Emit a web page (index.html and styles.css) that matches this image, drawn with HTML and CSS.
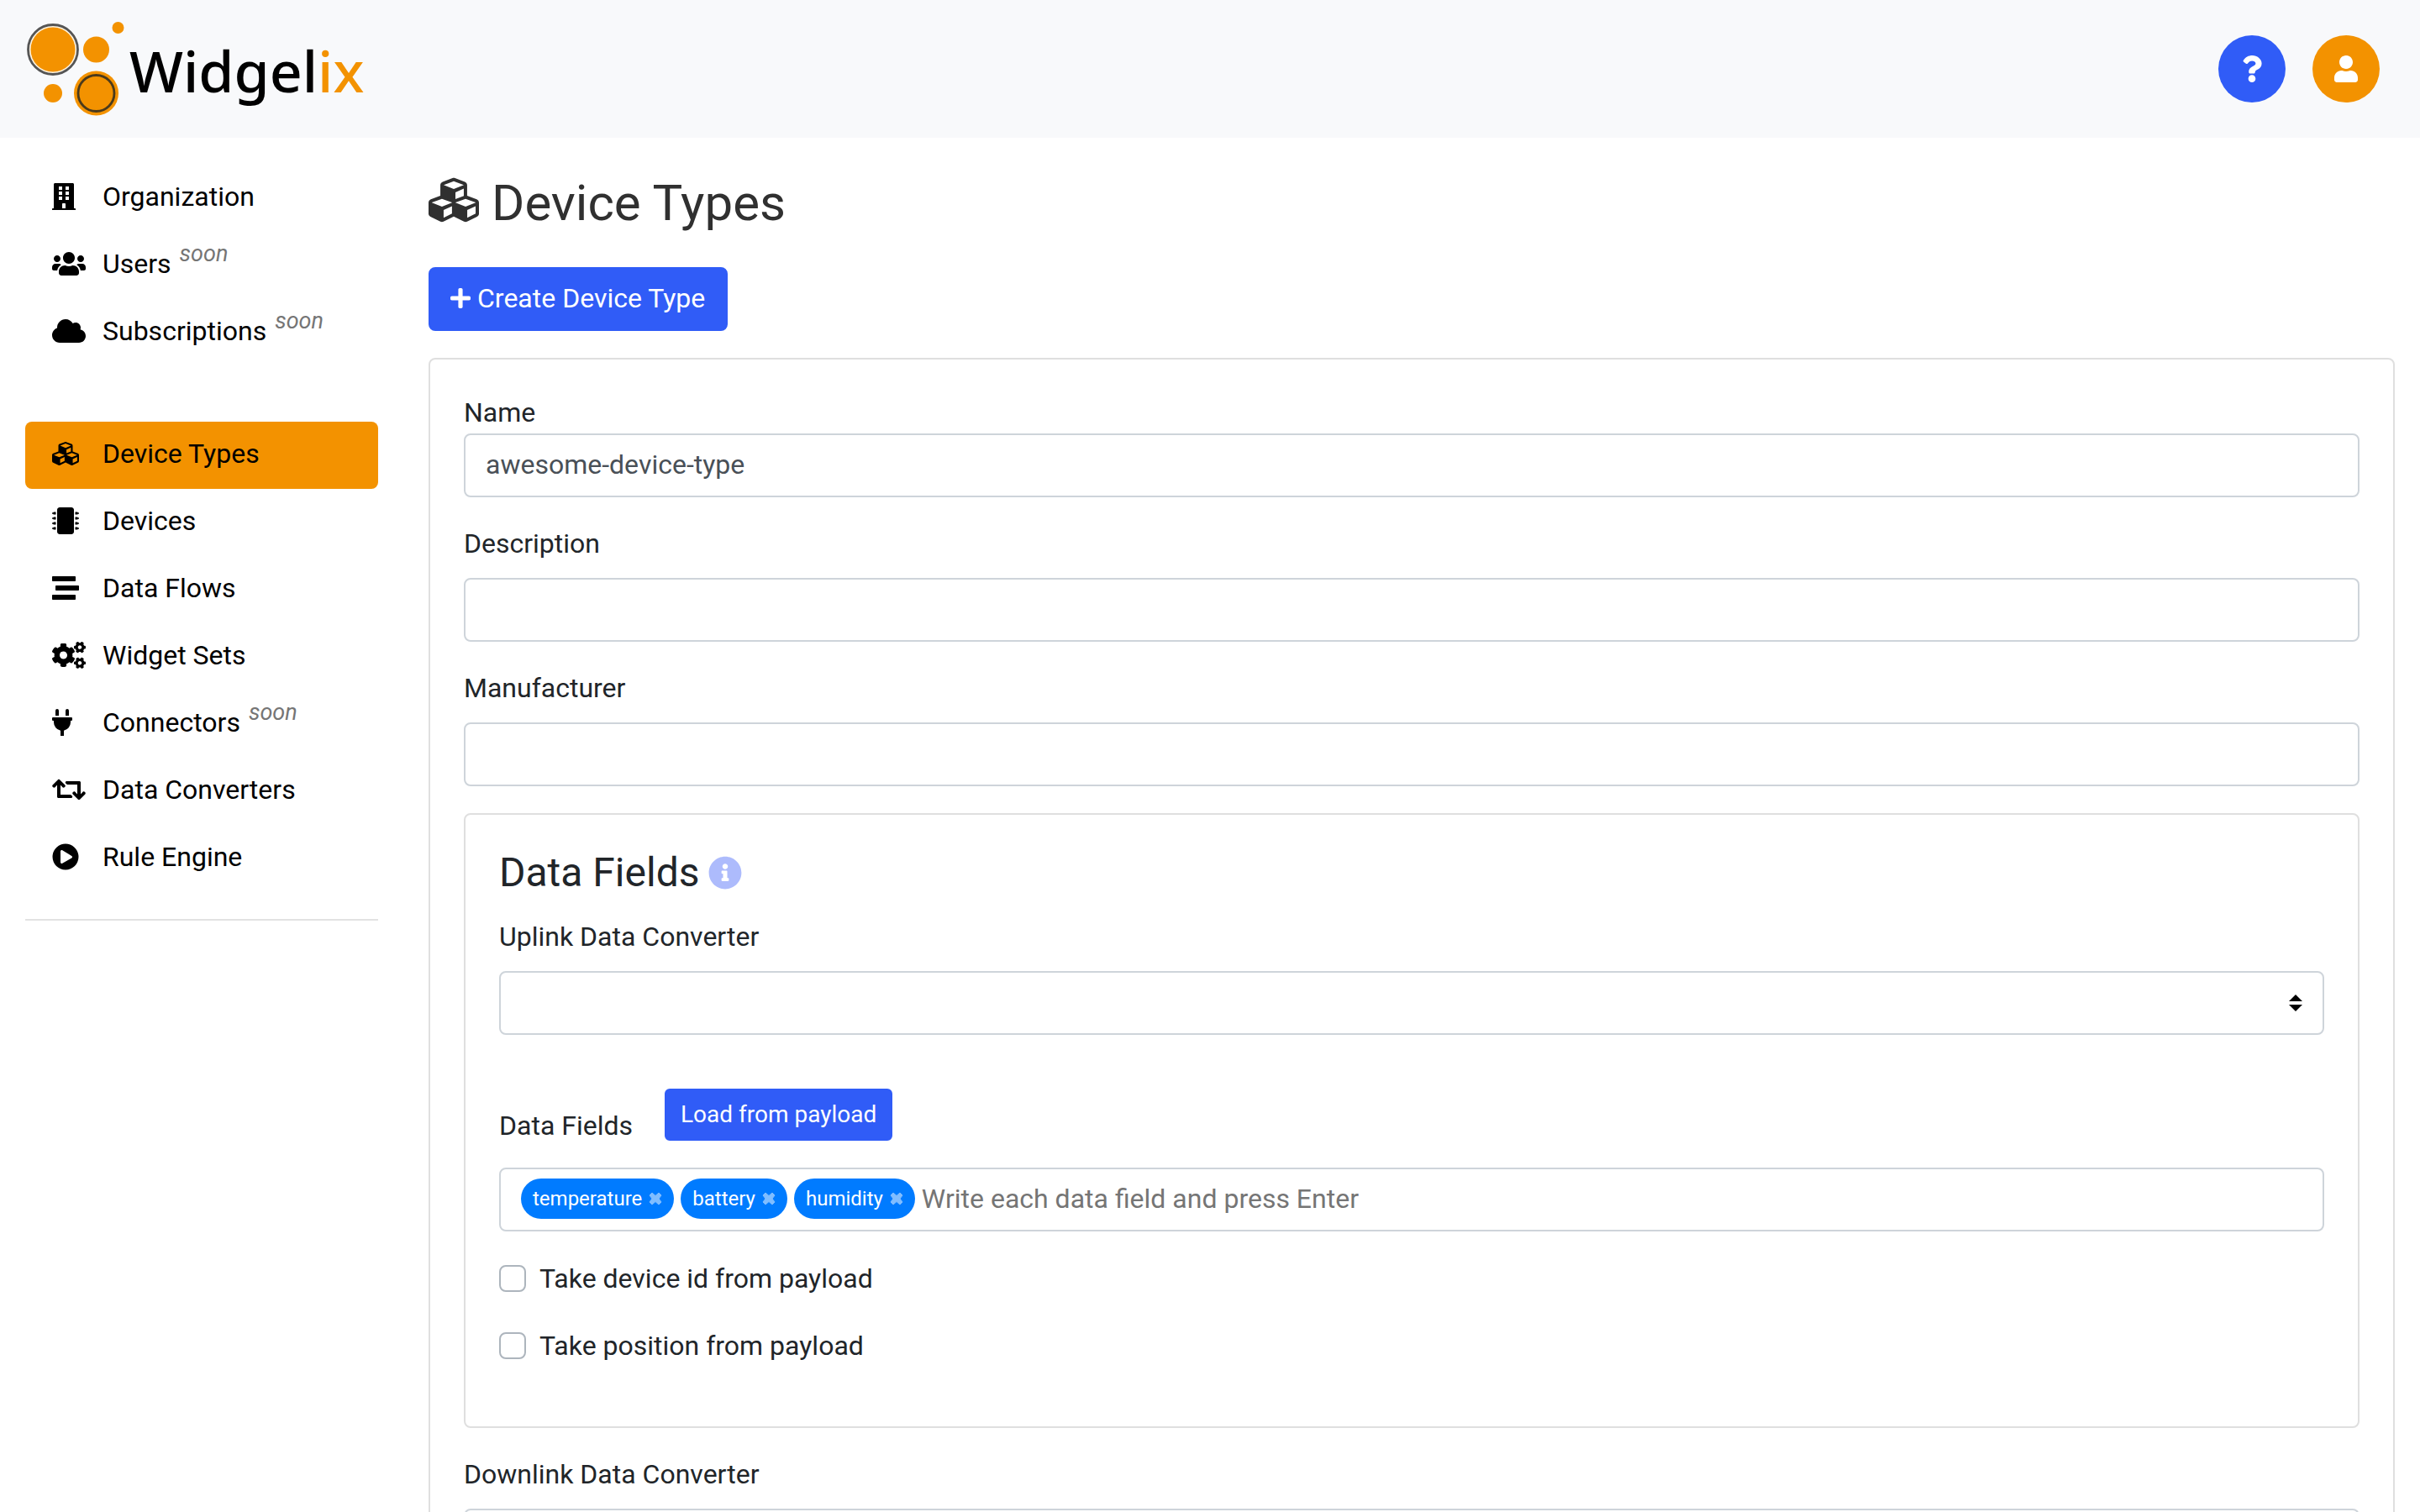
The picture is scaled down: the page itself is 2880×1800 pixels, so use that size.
FILE: index.html
```html
<!DOCTYPE html>
<html lang="en">
<head>
<meta charset="utf-8">
<meta name="viewport" content="width=device-width, initial-scale=1">
<title>Widgelix - Device Types</title>
<link rel="stylesheet" href="styles.css">
</head>
<body>
<svg class="sprite" aria-hidden="true">
  <symbol id="cubes" viewBox="0 0 512 512"><path d="M488.6 250.2L392 214V105.5c0-15-9.3-28.4-23.4-33.7l-100-37.5c-8.1-3.1-17.1-3.1-25.3 0l-100 37.5c-14.1 5.3-23.4 18.7-23.4 33.7V214l-96.6 36.2C9.3 255.5 0 268.9 0 283.9V394c0 13.6 7.7 26.1 19.9 32.2l100 50c10.1 5.1 22.1 5.1 32.2 0l103.9-52 103.9 52c10.1 5.1 22.1 5.1 32.2 0l100-50c12.2-6.1 19.9-18.6 19.9-32.2V283.9c0-15-9.3-28.4-23.4-33.7zM358 214.8l-85 31.9v-68.2l85-37v73.3zM154 104.1l102-38.2 102 38.2v.6l-102 41.4-102-41.4v-.6zm84 291.1l-85 42.5v-79.1l85-38.8v75.4zm0-112l-102 41.4-102-41.4v-.6l102-38.2 102 38.2v.6zm240 112l-85 42.5v-79.1l85-38.8v75.4zm0-112l-102 41.4-102-41.4v-.6l102-38.2 102 38.2v.6z"/></symbol>
  <symbol id="cross" viewBox="0 0 16 16"><path d="M4 1 8 4.500 12 1l3 3-3 4 3 4-3 3-4-3.500L4 15l-3-3 3-4-3-4z" stroke-linejoin="round" stroke="currentColor" stroke-width="1"/></symbol>
</svg>

<header class="topbar">
  <a class="brand" href="#">
    <svg class="brand-mark" viewBox="0 0 118 116" aria-hidden="true">
      <circle cx="31" cy="33" r="29.500" fill="#fff4e0" stroke="#555" stroke-width="2.800"/>
      <circle cx="31" cy="33" r="26.500" fill="#f39200"/>
      <circle cx="82.500" cy="33" r="15.500" fill="#f39200"/>
      <circle cx="108.500" cy="7" r="7" fill="#f39200"/>
      <circle cx="31" cy="85" r="11" fill="#f39200"/>
      <circle cx="82.500" cy="85" r="26.500" fill="#f39200"/>
      <circle cx="82.500" cy="85" r="21.500" fill="none" stroke="#4a3a1c" stroke-width="2.800"/>
    </svg>
    <span class="brand-name">Widgel<span class="brand-accent">ix</span></span>
  </a>
  <div class="topbar-actions">
    <button class="round round-help" type="button" aria-label="Help">
      <svg class="icon" viewBox="0 0 384 512"><path d="M202.021 0C122.202 0 70.503 32.703 29.914 91.026c-7.363 10.58-5.093 25.086 5.178 32.874l43.138 32.709c10.373 7.865 25.132 6.026 33.253-4.148 25.049-31.381 43.63-49.449 82.757-49.449 30.764 0 68.816 19.799 68.816 49.631 0 22.552-18.617 34.134-48.993 51.164-35.423 19.86-82.299 44.576-82.299 106.405V320c0 13.255 10.745 24 24 24h72.471c13.255 0 24-10.745 24-24v-5.773c0-42.86 125.268-44.645 125.268-160.627C377.504 66.256 286.902 0 202.021 0zM192 373.459c-38.196 0-69.271 31.075-69.271 69.271 0 38.195 31.075 69.27 69.271 69.27s69.271-31.075 69.271-69.271-31.075-69.27-69.271-69.27z"/></svg>
    </button>
    <button class="round round-user" type="button" aria-label="Account">
      <svg class="icon" viewBox="0 0 448 512"><path d="M224 256c70.7 0 128-57.3 128-128S294.7 0 224 0 96 57.3 96 128s57.3 128 128 128zm89.6 32h-16.7c-22.2 10.2-46.9 16-72.9 16s-50.6-5.8-72.9-16h-16.7C60.2 288 0 348.2 0 422.4V464c0 26.5 21.5 48 48 48h352c26.5 0 48-21.500 48-48v-41.600c0-74.200-60.200-134.400-134.400-134.400z"/></svg>
    </button>
  </div>
</header>

<div class="layout">
  <nav class="sidebar">
    <div class="nav-group">
      <a class="nav-link" href="#"><span class="nav-icon"><svg class="icon" viewBox="0 0 448 512"><path fill-rule="evenodd" d="M436 480h-20V24c0-13.255-10.745-24-24-24H56C42.745 0 32 10.745 32 24v456H12c-6.627 0-12 5.373-12 12v20h448v-20c0-6.627-5.373-12-12-12zM128 64h64v64h-64zM256 64h64v64h-64zM128 160h64v64h-64zM256 160h64v64h-64zM128 256h64v64h-64zM256 256h64v64h-64zM192 396c0-6.627 5.373-12 12-12h40c6.627 0 12 5.373 12 12v84h-64z"/></svg></span>Organization</a>
      <a class="nav-link" href="#"><span class="nav-icon"><svg class="icon" viewBox="0 0 640 512"><path d="M96 224c35.3 0 64-28.7 64-64s-28.7-64-64-64-64 28.7-64 64 28.7 64 64 64zm448 0c35.3 0 64-28.7 64-64s-28.7-64-64-64-64 28.7-64 64 28.7 64 64 64zm32 32h-64c-17.6 0-33.5 7.1-45.1 18.6 40.3 22.1 68.9 62 75.1 109.4h66c17.7 0 32-14.3 32-32v-32c0-35.3-28.7-64-64-64zm-256 0c61.9 0 112-50.1 112-112S381.9 32 320 32 208 82.1 208 144s50.1 112 112 112zm76.8 32h-8.3c-20.8 10-43.9 16-68.5 16s-47.6-6-68.5-16h-8.3C179.6 288 128 339.6 128 403.2V432c0 26.5 21.5 48 48 48h288c26.5 0 48-21.5 48-48v-28.8c0-63.6-51.6-115.2-115.2-115.2zm-223.7-13.4C161.5 263.1 145.6 256 128 256H64c-35.3 0-64 28.7-64 64v32c0 17.7 14.3 32 32 32h65.9c6.3-47.4 34.9-87.3 75.2-109.4z"/></svg></span>Users <em class="soon">soon</em></a>
      <a class="nav-link" href="#"><span class="nav-icon"><svg class="icon" viewBox="0 0 640 512"><path d="M537.6 226.6c4.1-10.7 6.4-22.4 6.4-34.6 0-53-43-96-96-96-19.7 0-38.1 6-53.3 16.2C367 64.2 315.3 32 256 32c-88.4 0-160 71.6-160 160 0 2.7.1 5.4.2 8.1C40.2 219.8 0 273.2 0 336c0 79.5 64.5 144 144 144h368c70.7 0 128-57.3 128-128 0-61.9-44-113.6-102.4-125.4z"/></svg></span>Subscriptions <em class="soon">soon</em></a>
    </div>
    <div class="nav-group">
      <a class="nav-link nav-link-active" href="#" aria-current="page"><span class="nav-icon"><svg class="icon" viewBox="0 0 512 512"><use href="#cubes"/></svg></span>Device Types</a>
      <a class="nav-link" href="#"><span class="nav-icon"><svg class="icon" viewBox="0 0 512 512"><path d="M416 48v416c0 26.51-21.49 48-48 48H144c-26.51 0-48-21.49-48-48V48c0-26.51 21.49-48 48-48h224c26.51 0 48 21.49 48 48zm96 58v12a6 6 0 0 1-6 6h-18v6a6 6 0 0 1-6 6h-42V88h42a6 6 0 0 1 6 6v6h18a6 6 0 0 1 6 6zm0 96v12a6 6 0 0 1-6 6h-18v6a6 6 0 0 1-6 6h-42v-48h42a6 6 0 0 1 6 6v6h18a6 6 0 0 1 6 6zm0 96v12a6 6 0 0 1-6 6h-18v6a6 6 0 0 1-6 6h-42v-48h42a6 6 0 0 1 6 6v6h18a6 6 0 0 1 6 6zm0 96v12a6 6 0 0 1-6 6h-18v6a6 6 0 0 1-6 6h-42v-48h42a6 6 0 0 1 6 6v6h18a6 6 0 0 1 6 6zM30 376h42v48H30a6 6 0 0 1-6-6v-6H6a6 6 0 0 1-6-6v-12a6 6 0 0 1 6-6h18v-6a6 6 0 0 1 6-6zm0-96h42v48H30a6 6 0 0 1-6-6v-6H6a6 6 0 0 1-6-6v-12a6 6 0 0 1 6-6h18v-6a6 6 0 0 1 6-6zm0-96h42v48H30a6 6 0 0 1-6-6v-6H6a6 6 0 0 1-6-6v-12a6 6 0 0 1 6-6h18v-6a6 6 0 0 1 6-6zm0-96h42v48H30a6 6 0 0 1-6-6v-6H6a6 6 0 0 1-6-6v-12a6 6 0 0 1 6-6h18v-6a6 6 0 0 1 6-6z"/></svg></span>Devices</a>
      <a class="nav-link" href="#"><span class="nav-icon"><svg class="icon" viewBox="0 0 512 512"><path d="M16 128h416c8.84 0 16-7.16 16-16V48c0-8.84-7.16-16-16-16H16C7.16 32 0 39.16 0 48v64c0 8.84 7.16 16 16 16zm480 80H80c-8.84 0-16 7.16-16 16v64c0 8.84 7.16 16 16 16h416c8.84 0 16-7.16 16-16v-64c0-8.84-7.16-16-16-16zm-64 176H16c-8.84 0-16 7.16-16 16v64c0 8.84 7.16 16 16 16h416c8.84 0 16-7.16 16-16v-64c0-8.84-7.16-16-16-16z"/></svg></span>Data Flows</a>
      <a class="nav-link" href="#"><span class="nav-icon"><svg class="icon" viewBox="0 0 640 512"><path d="M512.1 191l-8.2 14.3c-3 5.3-9.4 7.5-15.1 5.4-11.8-4.4-22.6-10.7-32.1-18.6-4.6-3.8-5.8-10.5-2.8-15.7l8.2-14.3c-6.9-8-12.3-17.3-15.9-27.4h-16.5c-6 0-11.2-4.3-12.2-10.3-2-12-2.1-24.6 0-37.1 1-6 6.2-10.4 12.2-10.4h16.5c3.6-10.1 9-19.4 15.9-27.4l-8.2-14.3c-3-5.2-1.9-11.9 2.8-15.7 9.5-7.9 20.4-14.2 32.1-18.6 5.7-2.1 12.1.1 15.1 5.4l8.2 14.3c10.5-1.9 21.2-1.9 31.7 0L552 6.3c3-5.3 9.4-7.5 15.1-5.4 11.8 4.4 22.6 10.7 32.1 18.6 4.6 3.8 5.8 10.5 2.8 15.7l-8.2 14.3c6.9 8 12.3 17.3 15.9 27.4h16.5c6 0 11.2 4.3 12.2 10.3 2 12 2.1 24.6 0 37.1-1 6-6.2 10.4-12.2 10.4h-16.5c-3.6 10.1-9 19.4-15.9 27.4l8.2 14.3c3 5.2 1.9 11.9-2.8 15.7-9.5 7.9-20.4 14.2-32.1 18.6-5.7 2.1-12.1-.1-15.1-5.4l-8.2-14.3c-10.4 1.9-21.2 1.9-31.7 0zm-10.5-58.8c38.5 29.6 82.4-14.3 52.8-52.8-38.5-29.7-82.4 14.3-52.8 52.8zM386.3 286.1l33.7 16.8c10.1 5.8 14.5 18.1 10.5 29.1-8.9 24.2-26.4 46.4-42.6 65.8-7.4 8.9-20.2 11.1-30.3 5.3l-29.1-16.8c-16 13.7-34.6 24.6-54.9 31.7v33.6c0 11.6-8.3 21.6-19.7 23.6-24.6 4.2-50.4 4.4-75.9 0-11.5-2-20-11.9-20-23.6V418c-20.3-7.2-38.9-18-54.9-31.7L74 403c-10 5.8-22.9 3.6-30.3-5.3-16.2-19.4-33.3-41.6-42.2-65.7-4-10.9.4-23.2 10.5-29.1l33.3-16.8c-3.9-20.9-3.9-42.4 0-63.4L12 205.8c-10.1-5.8-14.6-18.1-10.5-29 8.9-24.2 26-46.4 42.2-65.8 7.4-8.9 20.2-11.1 30.3-5.3l29.1 16.8c16-13.7 34.6-24.6 54.9-31.7V57.1c0-11.5 8.2-21.5 19.6-23.5 24.6-4.2 50.5-4.4 76-.1 11.5 2 20 11.9 20 23.6v33.6c20.3 7.2 38.9 18 54.9 31.7l29.1-16.8c10-5.8 22.9-3.6 30.3 5.3 16.2 19.4 33.2 41.6 42.1 65.8 4 10.9.1 23.2-10 29.1l-33.7 16.8c3.9 21 3.9 42.5 0 63.5zm-117.6 21.1c59.2-77-28.7-164.9-105.7-105.7-59.2 77 28.7 164.9 105.7 105.7zm243.4 182.7l-8.2 14.3c-3 5.3-9.4 7.5-15.1 5.4-11.8-4.4-22.6-10.7-32.1-18.6-4.6-3.8-5.8-10.5-2.8-15.7l8.2-14.3c-6.9-8-12.3-17.3-15.9-27.4h-16.5c-6 0-11.2-4.3-12.2-10.3-2-12-2.1-24.6 0-37.1 1-6 6.2-10.4 12.2-10.4h16.5c3.6-10.1 9-19.4 15.9-27.4l-8.2-14.3c-3-5.2-1.9-11.9 2.8-15.7 9.5-7.9 20.4-14.2 32.1-18.6 5.7-2.1 12.1.1 15.1 5.4l8.2 14.3c10.5-1.9 21.2-1.9 31.7 0l8.2-14.3c3-5.3 9.4-7.5 15.1-5.4 11.8 4.4 22.6 10.7 32.1 18.6 4.6 3.8 5.8 10.5 2.8 15.7l-8.2 14.3c6.9 8 12.3 17.3 15.9 27.4h16.5c6 0 11.2 4.3 12.2 10.3 2 12 2.1 24.6 0 37.1-1 6-6.2 10.4-12.2 10.4h-16.5c-3.6 10.1-9 19.4-15.9 27.4l8.2 14.3c3 5.2 1.9 11.9-2.8 15.7-9.5 7.9-20.4 14.2-32.1 18.6-5.7 2.1-12.1-.1-15.1-5.4l-8.2-14.3c-10.4 1.9-21.2 1.9-31.7 0zM501.6 431c38.5 29.6 82.4-14.3 52.8-52.8-38.5-29.6-82.4 14.3-52.8 52.8z"/></svg></span>Widget Sets</a>
      <a class="nav-link" href="#"><span class="nav-icon"><svg class="icon" viewBox="0 0 384 512"><path d="M320 32a32 32 0 0 0-64 0v96h64zm48 128H16A16 16 0 0 0 0 176v32a16 16 0 0 0 16 16h16v32a160.07 160.07 0 0 0 128 156.8V512h64v-99.2A160.07 160.07 0 0 0 352 256v-32h16a16 16 0 0 0 16-16v-32a16 16 0 0 0-16-16zM128 32a32 32 0 0 0-64 0v96h64z"/></svg></span>Connectors <em class="soon">soon</em></a>
      <a class="nav-link" href="#"><span class="nav-icon"><svg class="icon" viewBox="0 0 640 512"><path d="M629.657 343.598L528.971 444.284c-9.373 9.372-24.568 9.372-33.941 0L394.343 343.598c-9.373-9.373-9.373-24.569 0-33.941l10.823-10.823c9.562-9.562 25.133-9.34 34.419.492L480 342.118V160H292.451a24.005 24.005 0 0 1-16.971-7.029l-16-16C244.361 121.851 255.069 96 276.451 96H520c13.255 0 24 10.745 24 24v222.118l40.416-42.792c9.285-9.831 24.856-10.054 34.419-.492l10.823 10.823c9.372 9.372 9.372 24.569-.001 33.941zm-265.138 15.431A23.999 23.999 0 0 0 347.548 352H160V169.881l40.416 42.792c9.286 9.831 24.856 10.054 34.419.491l10.822-10.822c9.373-9.373 9.373-24.569 0-33.941L144.971 67.716c-9.373-9.373-24.569-9.373-33.941 0L10.343 168.402c-9.373 9.373-9.373 24.569 0 33.941l10.822 10.822c9.562 9.562 25.133 9.34 34.419-.491L96 169.881V392c0 13.255 10.745 24 24 24h243.549c21.382 0 32.09-25.851 16.971-40.971l-16.001-16z"/></svg></span>Data Converters</a>
      <a class="nav-link" href="#"><span class="nav-icon"><svg class="icon" viewBox="0 0 512 512"><path d="M256 8C119 8 8 119 8 256s111 248 248 248 248-111 248-248S393 8 256 8zm115.7 272l-176 101c-15.8 8.8-35.7-2.5-35.7-21V152c0-18.4 19.8-29.8 35.7-21l176 107c16.4 9.2 16.4 32.9 0 42z"/></svg></span>Rule Engine</a>
    </div>
    <hr class="nav-rule">
  </nav>

  <main class="content">
    <h1 class="page-title"><svg class="title-icon" viewBox="0 0 512 512" aria-hidden="true"><use href="#cubes"/></svg>Device Types</h1>
    <button class="btn" type="button"><svg class="plus" viewBox="0 32 448 448" aria-hidden="true"><path d="M416 208H272V64c0-17.67-14.33-32-32-32h-32c-17.67 0-32 14.33-32 32v144H32c-17.67 0-32 14.33-32 32v32c0 17.67 14.33 32 32 32h144v144c0 17.67 14.33 32 32 32h32c17.67 0 32-14.33 32-32V304h144c17.67 0 32-14.33 32-32v-32c0-17.67-14.33-32-32-32z"/></svg>Create Device Type</button>

    <form class="card">
      <div class="field field-tight">
        <label for="name">Name</label>
        <input class="control" id="name" type="text" value="awesome-device-type">
      </div>
      <div class="field">
        <label for="description">Description</label>
        <input class="control" id="description" type="text">
      </div>
      <div class="field">
        <label for="manufacturer">Manufacturer</label>
        <input class="control" id="manufacturer" type="text">
      </div>

      <section class="card">
        <h2 class="section-title">Data Fields<svg class="info" viewBox="0 0 512 512" aria-hidden="true"><path d="M256 8C119.043 8 8 119.083 8 256c0 136.997 111.043 248 248 248s248-111.003 248-248C504 119.083 392.957 8 256 8zm0 110c23.196 0 42 18.804 42 42s-18.804 42-42 42-42-18.804-42-42 18.804-42 42-42zm56 254c0 6.627-5.373 12-12 12h-88c-6.627 0-12-5.373-12-12v-24c0-6.627 5.373-12 12-12h12v-64h-12c-6.627 0-12-5.373-12-12v-24c0-6.627 5.373-12 12-12h64c6.627 0 12 5.373 12 12v100h12c6.627 0 12 5.373 12 12v24z"/></svg></h2>
        <div class="field field-spaced">
          <label for="uplink">Uplink Data Converter</label>
          <select class="control select" id="uplink"><option></option></select>
        </div>
        <div class="field-head">
          <label for="tags">Data Fields</label>
          <button class="btn btn-small" type="button">Load from payload</button>
        </div>
        <div class="control tags">
          <span class="tag">temperature<button class="tag-remove" type="button" aria-label="Remove temperature"><svg viewBox="0 0 16 16"><use href="#cross"/></svg></button></span>
          <span class="tag">battery<button class="tag-remove" type="button" aria-label="Remove battery"><svg viewBox="0 0 16 16"><use href="#cross"/></svg></button></span>
          <span class="tag">humidity<button class="tag-remove" type="button" aria-label="Remove humidity"><svg viewBox="0 0 16 16"><use href="#cross"/></svg></button></span>
          <input class="tag-input" id="tags" type="text" placeholder="Write each data field and press Enter">
        </div>
        <label class="check"><input class="checkbox" type="checkbox">Take device id from payload</label>
        <label class="check"><input class="checkbox" type="checkbox">Take position from payload</label>
      </section>

      <div class="field">
        <label for="downlink">Downlink Data Converter</label>
        <select class="control select" id="downlink"><option></option></select>
      </div>
    </form>
  </main>
</div>
</body>
</html>
```
FILE: styles.css
```css
* {
  box-sizing: border-box;
}

html {
  scrollbar-width: none;
}

body {
  margin: 0;
  background: #fff;
  color: #212529;
  font: 32px/48px Roboto, sans-serif;
}

button,
input,
select {
  margin: 0;
  font: inherit;
}

svg {
  display: block;
  fill: currentColor;
}

.sprite {
  display: none;
}

.icon {
  height: 32px;
}

.topbar {
  display: flex;
  align-items: flex-start;
  justify-content: space-between;
  padding: 26px 48px 22px 32px;
  background: #f8f9fb;
}

.brand {
  display: flex;
  gap: 4px;
  color: #000;
  text-decoration: none;
}

.brand-mark {
  width: 118px;
  height: 116px;
}

.brand-name {
  font: 500 68px/116px "Noto Sans", sans-serif;
}

.brand-accent {
  color: #f39200;
}

.topbar-actions {
  display: flex;
  gap: 32px;
  padding-top: 16px;
}

.round {
  display: flex;
  align-items: center;
  justify-content: center;
  width: 80px;
  height: 80px;
  padding: 0;
  border: 0;
  border-radius: 50%;
  color: #fff;
}

.round-help {
  background: #305cf7;
}

.round-user {
  background: #f39200;
}

.layout {
  display: grid;
  grid-template-columns: 1fr 5fr;
}

.sidebar {
  padding: 32px 30px;
}

.nav-group {
  margin-bottom: 66px;
}

.nav-group + .nav-group {
  margin-bottom: 32px;
}

.nav-link {
  display: flex;
  align-items: center;
  padding: 14px 32px 18px;
  border-radius: 8px;
  color: #000;
  text-decoration: none;
}

.nav-link-active {
  background: #f39200;
}

.nav-icon {
  width: 60px;
}

.soon {
  margin: 0 0 24px 10px;
  color: #757575;
  font-size: 27px;
  line-height: 24px;
}

.nav-rule {
  height: 2px;
  margin: 0;
  border: 0;
  background: #e2e2e2;
}

.content {
  min-width: 0;
  padding: 42px 30px;
}

.page-title {
  display: flex;
  gap: 15px;
  margin: 0 0 40px;
  color: #303030;
  font-size: 60px;
  font-weight: 400;
  line-height: 72px;
}

.title-icon {
  width: 60px;
  height: 60px;
  margin-top: 2px;
}

.btn {
  display: flex;
  align-items: center;
  gap: 8px;
  padding: 11px 25px 13px 24px;
  border: 2px solid #305cf7;
  border-radius: 8px;
  background: #305cf7;
  color: #fff;
}

.btn-small {
  padding: 8px 17px;
  border-radius: 6px;
  font-size: 28px;
  line-height: 42px;
}

.plus {
  width: 24px;
  height: 24px;
}

.card {
  margin: 32px 0 0;
  padding: 40px;
  border: 2px solid #dfdfdf;
  border-radius: 8px;
}

.field {
  display: flex;
  flex-direction: column;
  gap: 16px;
  margin-top: 32px;
}

.field label {
  padding-bottom: 2px;
  line-height: 46px;
}

.field-tight {
  gap: 0;
  margin-top: 0;
}

.field-spaced {
  margin: 24px 0 64px;
}

.control {
  width: 100%;
  height: 76px;
  padding: 11px 24px 13px;
  border: 2px solid #ced4da;
  border-radius: 8px;
  background: #fff;
  color: #495057;
}

.select {
  appearance: none;
  background: #fff url("data:image/svg+xml,%3Csvg xmlns='http://www.w3.org/2000/svg' viewBox='0 0 4 5'%3E%3Cpath d='M2 0L0 2h4zm0 5L0 3h4z'/%3E%3C/svg%3E") no-repeat right 24px center / 16px 20px;
}

.section-title {
  display: flex;
  align-items: center;
  gap: 10px;
  margin: 0;
  font-size: 48px;
  font-weight: 400;
  line-height: 58px;
}

.info {
  width: 40px;
  height: 40px;
  color: #adbbfc;
}

.field-head {
  display: flex;
  align-items: flex-start;
  gap: 38px;
  margin-bottom: 26px;
}

.field-head label {
  padding-top: 20px;
}

.tags {
  display: flex;
  align-items: center;
  gap: 8px;
}

.tag {
  display: flex;
  align-items: center;
  gap: 8px;
  padding: 0 14px;
  border-radius: 24px;
  background: #007bff;
  color: #fff;
  font-size: 24px;
}

.tag-remove {
  width: 16px;
  padding: 0;
  border: 0;
  background: none;
  color: #80bdff;
}

.tag-input {
  flex: 1;
  min-width: 0;
  padding: 0;
  border: 0;
  outline: 0;
  color: #495057;
}

.tag-input::placeholder {
  color: #757575;
}

.check {
  display: flex;
  align-items: center;
  gap: 16px;
  margin: 32px 0;
}

.checkbox {
  appearance: none;
  width: 32px;
  height: 32px;
  border: 2px solid #adb5bd;
  border-radius: 8px;
}
```
